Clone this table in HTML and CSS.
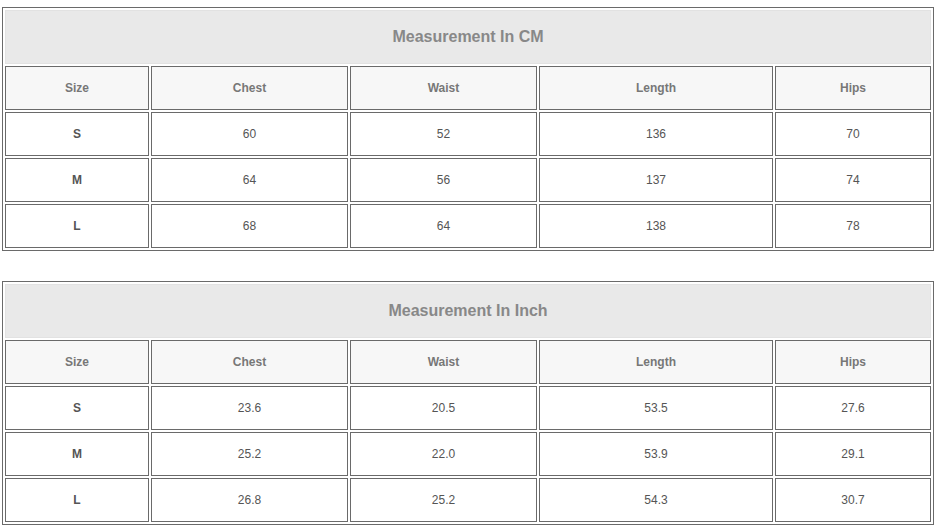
FILE: index.html
```html
<!DOCTYPE html>
<html>
<head>
<meta charset="utf-8">
<link rel="stylesheet" href="styles.css">
</head>
<body>
<div class="wrap">
  <table class="size-table">
    <colgroup>
      <col class="c-size"><col class="c-chest"><col class="c-waist"><col class="c-length"><col class="c-hips">
    </colgroup>
    <tr><th class="title" colspan="5">Measurement In CM</th></tr>
    <tr class="head"><th>Size</th><th>Chest</th><th>Waist</th><th>Length</th><th>Hips</th></tr>
    <tr><th class="sz">S</th><td>60</td><td>52</td><td>136</td><td>70</td></tr>
    <tr><th class="sz">M</th><td>64</td><td>56</td><td>137</td><td>74</td></tr>
    <tr><th class="sz">L</th><td>68</td><td>64</td><td>138</td><td>78</td></tr>
  </table>
  <table class="size-table">
    <colgroup>
      <col class="c-size"><col class="c-chest"><col class="c-waist"><col class="c-length"><col class="c-hips">
    </colgroup>
    <tr><th class="title" colspan="5">Measurement In Inch</th></tr>
    <tr class="head"><th>Size</th><th>Chest</th><th>Waist</th><th>Length</th><th>Hips</th></tr>
    <tr><th class="sz">S</th><td>23.6</td><td>20.5</td><td>53.5</td><td>27.6</td></tr>
    <tr><th class="sz">M</th><td>25.2</td><td>22.0</td><td>53.9</td><td>29.1</td></tr>
    <tr><th class="sz">L</th><td>26.8</td><td>25.2</td><td>54.3</td><td>30.7</td></tr>
  </table>
</div>
</body>
</html>
```
FILE: styles.css
```css
html, body {
  margin: 0;
  padding: 0;
  background: #fff;
}
body {
  font-family: "Liberation Sans", Arial, sans-serif;
}
.wrap {
  padding: 7px 0 0 2px;
  display: flex;
  flex-direction: column;
  gap: 30px;
}
.size-table {
  width: 932px;
  table-layout: fixed;
  border-collapse: separate;
  border-spacing: 2px;
  border: 1px solid #6a6a6a;
}
.c-size { width: 144px; }
.c-chest { width: 197px; }
.c-waist { width: 187px; }
.c-length { width: 234px; }
.c-hips { width: 156px; }
.size-table th,
.size-table td {
  box-sizing: border-box;
  border: 1px solid #6a6a6a;
  padding: 0;
  height: 44px;
  text-align: center;
  vertical-align: middle;
  font-size: 12px;
  color: #555;
  font-weight: normal;
}
.size-table th.title {
  height: 54px;
  background: #e9e9e9;
  border-color: #e2e2e2;
  font-size: 16px;
  font-weight: bold;
  color: #888;
}
.size-table .head th {
  background: #f7f7f7;
  font-weight: bold;
  color: #777;
}
.size-table th.sz {
  font-weight: bold;
  color: #555;
}
```
